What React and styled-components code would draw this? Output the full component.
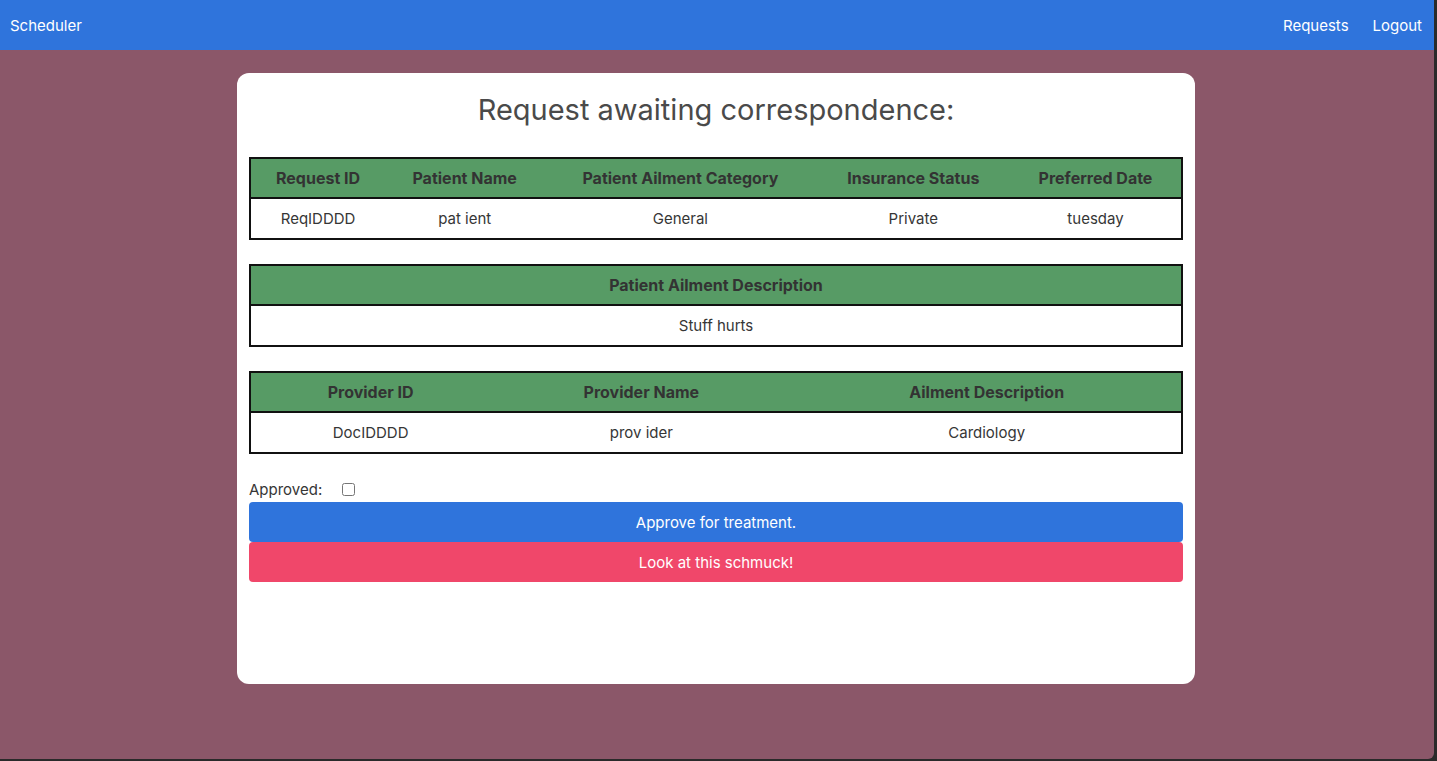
import styled, { createGlobalStyle } from 'styled-components';
import React, { useState } from 'react';

const GlobalStyle = createGlobalStyle`
  html, body {
    margin: 0;
    padding: 0;
    background: #2a2a2a;
  }
  body {
    font-family: Inter, "Noto Sans", "Liberation Sans", sans-serif;
    color: #363636;
  }
`;

const Page = styled.div`
  box-sizing: border-box;
  width: 1434px;
  height: 759px;
  background-color: #8b5769;
  border-bottom-right-radius: 6px;
  overflow: hidden;
  display: flex;
  flex-direction: column;
`;

const Navbar = styled.nav`
  height: 50px;
  background-color: #2f74dc;
  color: white;
  display: flex;
  align-items: center;
  justify-content: space-between;
  padding: 0 12px 0 10px;
  font-size: 15px;
`;

const NavLinks = styled.div`
  display: flex;
  gap: 24px;
`;

const NavLink = styled.a`
  color: white;
  text-decoration: none;
  cursor: pointer;
`;

const Card = styled.main`
  box-sizing: border-box;
  width: 958px;
  height: 611px;
  margin: 23px 0 0 237px;
  background: white;
  border-radius: 12px;
  padding: 12px 12px;
  display: flex;
  flex-direction: column;
`;

const Title = styled.h1`
  margin: 7px 0 30px;
  text-align: center;
  font-weight: 400;
  font-size: 29px;
  color: #4a4a4a;
`;

const Table = styled.table`
  width: 100%;
  border-collapse: collapse;
  border: 2px solid #111;
  margin-bottom: 24px;
  font-size: 15px;
`;

const Th = styled.th`
  background-color: #579b65;
  color: #333;
  font-size: 16px;
  font-weight: 700;
  height: 38px;
  padding: 0 12px;
  border-bottom: 2px solid #111;
`;

const Td = styled.td`
  text-align: center;
  color: #363636;
  height: 39px;
  padding: 0 12px;
`;

const ApprovedRow = styled.label`
  display: flex;
  align-items: center;
  gap: 20px;
  font-size: 15px;
  color: #363636;
  height: 22px;
`;

const Checkbox = styled.input`
  margin: 0;
  width: 13px;
  height: 13px;
`;

const Button = styled.button`
  width: 100%;
  height: 40px;
  border: none;
  border-radius: 4px;
  color: white;
  font-family: inherit;
  font-size: 15px;
  background-color: ${p => (p.$danger ? '#f0476a' : '#2f74dc')};
  cursor: pointer;
`;

const ButtonStack = styled.div`
  display: flex;
  flex-direction: column;
  margin-top: 2px;
`;

function App() {
  const [approved, setApproved] = useState(false);

  return (
    <>
      <GlobalStyle />
      <Page>
        <Navbar>
          <NavLink>Scheduler</NavLink>
          <NavLinks>
            <NavLink>Requests</NavLink>
            <NavLink>Logout</NavLink>
          </NavLinks>
        </Navbar>
        <Card>
          <Title>Request awaiting correspondence:</Title>
          <Table>
            <thead>
              <tr>
                <Th>Request ID</Th>
                <Th>Patient Name</Th>
                <Th>Patient Ailment Category</Th>
                <Th>Insurance Status</Th>
                <Th>Preferred Date</Th>
              </tr>
            </thead>
            <tbody>
              <tr>
                <Td>ReqIDDDD</Td>
                <Td>pat ient</Td>
                <Td>General</Td>
                <Td>Private</Td>
                <Td>tuesday</Td>
              </tr>
            </tbody>
          </Table>
          <Table>
            <thead>
              <tr>
                <Th>Patient Ailment Description</Th>
              </tr>
            </thead>
            <tbody>
              <tr>
                <Td>Stuff hurts</Td>
              </tr>
            </tbody>
          </Table>
          <Table>
            <thead>
              <tr>
                <Th>Provider ID</Th>
                <Th>Provider Name</Th>
                <Th>Ailment Description</Th>
              </tr>
            </thead>
            <tbody>
              <tr>
                <Td>DocIDDDD</Td>
                <Td>prov ider</Td>
                <Td>Cardiology</Td>
              </tr>
            </tbody>
          </Table>
          <ApprovedRow>
            Approved:
            <Checkbox type="checkbox" checked={approved} onChange={e => setApproved(e.target.checked)} />
          </ApprovedRow>
          <ButtonStack>
            <Button>Approve for treatment.</Button>
            <Button $danger>Look at this schmuck!</Button>
          </ButtonStack>
        </Card>
      </Page>
    </>
  );
}

export default App;
